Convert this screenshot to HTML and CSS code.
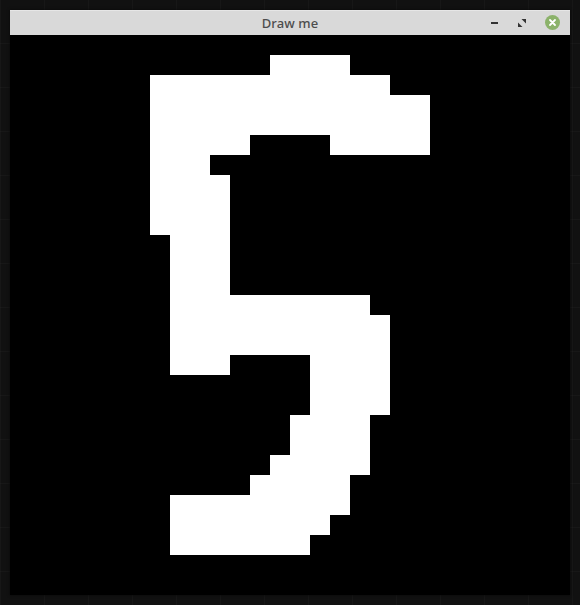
FILE: index.html
```html
<!DOCTYPE html>
<html>
<head>
<meta charset="utf-8">
<title>Draw me</title>
<link rel="stylesheet" href="styles.css">
</head>
<body>
<div class="desktop">
  <div class="window">
    <div class="titlebar">
      <span class="title">Draw me</span>
      <div class="controls">
        <span class="btn-min"></span>
        <svg class="btn-max" width="8" height="8" viewBox="0 0 8 8">
          <path d="M3.5 0H8V4.5Z M4.5 8H0V3.5Z" fill="#333"/>
        </svg>
        <svg class="btn-close" width="15" height="15" viewBox="0 0 15 15">
          <circle cx="7.5" cy="7.5" r="7.5" fill="#8bb26a"/>
          <path d="M5 5L10 10M10 5L5 10" stroke="#fff" stroke-width="1.8" stroke-linecap="round"/>
        </svg>
      </div>
    </div>
    <svg class="canvas" width="560" height="560" viewBox="0 0 28 28" shape-rendering="crispEdges">
      <rect width="28" height="28" fill="#000"/>
      <g fill="#fff">
        <rect x="13" y="1" width="4" height="1"/>
        <rect x="7" y="2" width="12" height="1"/>
        <rect x="7" y="3" width="14" height="2"/>
        <rect x="7" y="5" width="5" height="1"/>
        <rect x="16" y="5" width="5" height="1"/>
        <rect x="7" y="6" width="3" height="1"/>
        <rect x="7" y="7" width="4" height="3"/>
        <rect x="8" y="10" width="3" height="3"/>
        <rect x="8" y="13" width="10" height="1"/>
        <rect x="8" y="14" width="11" height="2"/>
        <rect x="8" y="16" width="3" height="1"/>
        <rect x="15" y="16" width="4" height="1"/>
        <rect x="15" y="17" width="4" height="2"/>
        <rect x="14" y="19" width="4" height="2"/>
        <rect x="13" y="21" width="5" height="1"/>
        <rect x="12" y="22" width="5" height="1"/>
        <rect x="8" y="23" width="9" height="1"/>
        <rect x="8" y="24" width="8" height="1"/>
        <rect x="8" y="25" width="7" height="1"/>
      </g>
    </svg>
  </div>
</div>
</body>
</html>
```

FILE: styles.css
```css
html, body {
  margin: 0;
  padding: 0;
  background: #111111;
}

.desktop {
  width: 580px;
  height: 605px;
  padding: 10px 0 0 10px;
  box-sizing: border-box;
  background-color: #111111;
  background-image:
    linear-gradient(90deg, rgba(255,255,255,0.025) 1px, transparent 1px),
    linear-gradient(0deg, rgba(255,255,255,0.025) 1px, transparent 1px);
  background-size: 44px 44px;
}

.window {
  width: 560px;
  display: flex;
  flex-direction: column;
  box-shadow: 0 0 3px rgba(0,0,0,0.6);
}

.titlebar {
  height: 25px;
  background: #d9d9d9;
  border-top: 1px solid #e6e6e6;
  box-sizing: border-box;
  display: flex;
  align-items: center;
  justify-content: center;
  position: relative;
}

.title {
  font-family: "Noto Sans", "DejaVu Sans", sans-serif;
  font-size: 13px;
  font-weight: 500;
  color: #4d4d4d;
  letter-spacing: 0.1px;
}

.controls {
  position: absolute;
  right: 10px;
  top: 4px;
  display: flex;
  align-items: center;
  gap: 0;
  height: 15px;
}

.btn-min {
  width: 7px;
  height: 2px;
  background: #333;
  margin-right: 20px;
}

.btn-max {
  display: block;
  margin-right: 19px;
}

.btn-close {
  display: block;
}

.canvas {
  display: block;
}
```
